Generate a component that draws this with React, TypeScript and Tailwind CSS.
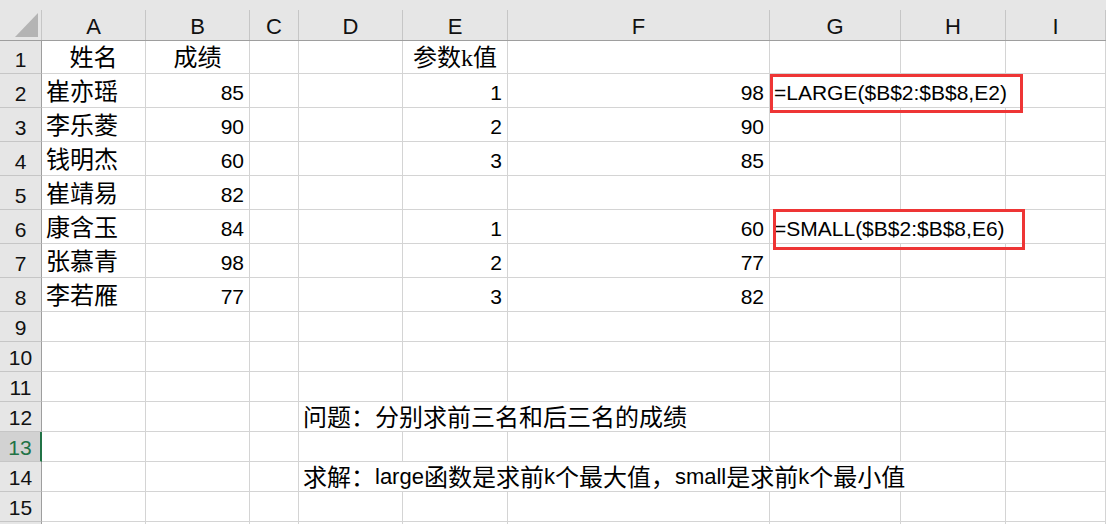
import React from "react";

type Cell = { t?: React.ReactNode; a?: "l" | "c" | "r"; f?: "num" | "song" | "cjk"; span?: number };

const COLS = "grid grid-cols-[42px_104px_104px_49px_104px_105px_262px_131px_105px_1fr]";
const LETTERS = ["A", "B", "C", "D", "E", "F", "G", "H", "I"];

const song = (t: string, a: "l" | "c" = "l"): Cell => ({ t, a, f: "song" });
const num = (t: string): Cell => ({ t, a: "r", f: "num" });
const e: Cell = {};

// latin bits inside the chinese note are narrower than the CJK font's own latin
const Lat = ({ children }: { children: string }) => (
  <span className="font-['Liberation_Sans',sans-serif] text-[22px]">{children}</span>
);

const rows: { h: string; n?: boolean; cells: Cell[] }[] = [
  { h: "h-[33px]", cells: [song("姓名", "c"), song("成绩", "c"), e, e, song("参数k值", "c"), e, e, e, e] },
  { h: "h-[34px]", cells: [song("崔亦瑶"), num("85"), e, e, num("1"), num("98"), { t: "=LARGE($B$2:$B$8,E2)", a: "l", f: "num", span: 3 }] },
  { h: "h-[34px]", cells: [song("李乐菱"), num("90"), e, e, num("2"), num("90"), e, e, e] },
  { h: "h-[34px]", cells: [song("钱明杰"), num("60"), e, e, num("3"), num("85"), e, e, e] },
  { h: "h-[34px]", cells: [song("崔靖易"), num("82"), e, e, e, e, e, e, e] },
  { h: "h-[34px]", cells: [song("康含玉"), num("84"), e, e, num("1"), num("60"), { t: "=SMALL($B$2:$B$8,E6)", a: "l", f: "num", span: 3 }] },
  { h: "h-[34px]", cells: [song("张慕青"), num("98"), e, e, num("2"), num("77"), e, e, e] },
  { h: "h-[34px]", cells: [song("李若雁"), num("77"), e, e, num("3"), num("82"), e, e, e] },
  { h: "h-[30px]", cells: [e, e, e, e, e, e, e, e, e] },
  { h: "h-[30px]", cells: [e, e, e, e, e, e, e, e, e] },
  { h: "h-[30px]", cells: [e, e, e, e, e, e, e, e, e] },
  { h: "h-[30px]", cells: [e, e, e, { t: "问题：分别求前三名和后三名的成绩", a: "l", f: "cjk", span: 3 }, e, e, e] },
  { h: "h-[30px]", cells: [e, e, e, e, e, e, e, e, e] },
  {
    h: "h-[30px]",
    cells: [
      e, e, e,
      {
        t: (
          <>
            求解：<Lat>large</Lat>函数是求前<Lat>k</Lat>个最大值，<Lat>small</Lat>是求前<Lat>k</Lat>个最小值
          </>
        ),
        a: "l",
        f: "cjk",
        span: 5,
      },
      e,
    ],
  },
  { h: "h-[30px]", cells: [e, e, e, e, e, e, e, e, e] },
  { h: "h-[30px]", n: false, cells: [e, e, e, e, e, e, e, e, e] },
];

const spanCls: Record<number, string> = { 1: "", 3: "col-span-3", 5: "col-span-5" };

function CellView({ c }: { c: Cell }) {
  const align = c.a === "r" ? "justify-end pr-[5px]" : c.a === "c" ? "justify-center" : "pl-[4px]";
  const font =
    c.f === "num"
      ? "font-['Liberation_Sans',sans-serif] text-[21px] pb-[4px]"
      : c.f === "song"
      ? "font-['Liberation_Serif','Noto_Sans_CJK_SC',serif] text-[24px] pb-[3px]"
      : "font-['Noto_Sans_CJK_SC',sans-serif] text-[24px] pb-[3px]";
  return (
    <div className={`${spanCls[c.span ?? 1]} flex items-end ${align} ${font} leading-none whitespace-nowrap border-r border-b border-[#d4d4d4] text-black`}>
      {c.t}
    </div>
  );
}

export default function App() {
  return (
    <div className="relative w-[1106px] h-[524px] overflow-hidden bg-white">
      <div className={`${COLS} h-[41px] bg-[#e6e6e6] border-b border-[#9e9e9e] font-['Liberation_Sans',sans-serif]`}>
        <div className="mt-[10px] border-r border-[#c6c6c6] flex items-end justify-end pr-[3px] pb-[3px]">
          <svg width="23" height="24" viewBox="0 0 23 24">
            <polygon points="23,0 23,24 0,24" fill="#b4b4b4" />
          </svg>
        </div>
        {LETTERS.map(l => (
          <div key={l} className="mt-[10px] border-r border-[#c6c6c6] flex items-end justify-center pb-[2px] text-[22px] leading-none text-[#111]">
            {l}
          </div>
        ))}
      </div>

      {rows.map((r, i) => {
        const sel = i + 1 === 13;
        return (
          <div key={i} className={`${COLS} ${r.h}`}>
            <div
              className={`flex items-end justify-center pb-[3px] text-[21px] leading-none font-['Liberation_Sans',sans-serif] border-b border-[#c6c6c6] ${
                sel ? "bg-[#d2d2d2] text-[#217346] border-r-2 border-r-[#217346]" : "bg-[#e6e6e6] text-[#111] border-r border-r-[#9e9e9e]"
              }`}
            >
              {r.n === false ? "" : i + 1}
            </div>
            {r.cells.map((c, j) => (
              <CellView key={j} c={c} />
            ))}
          </div>
        );
      })}

      <div className="absolute left-[770px] top-[74px] w-[253px] h-[39px] border-[3px] border-[#ee3535]" />
      <div className="absolute left-[773px] top-[209px] w-[252px] h-[41px] border-[3px] border-[#ee3535]" />
    </div>
  );
}
